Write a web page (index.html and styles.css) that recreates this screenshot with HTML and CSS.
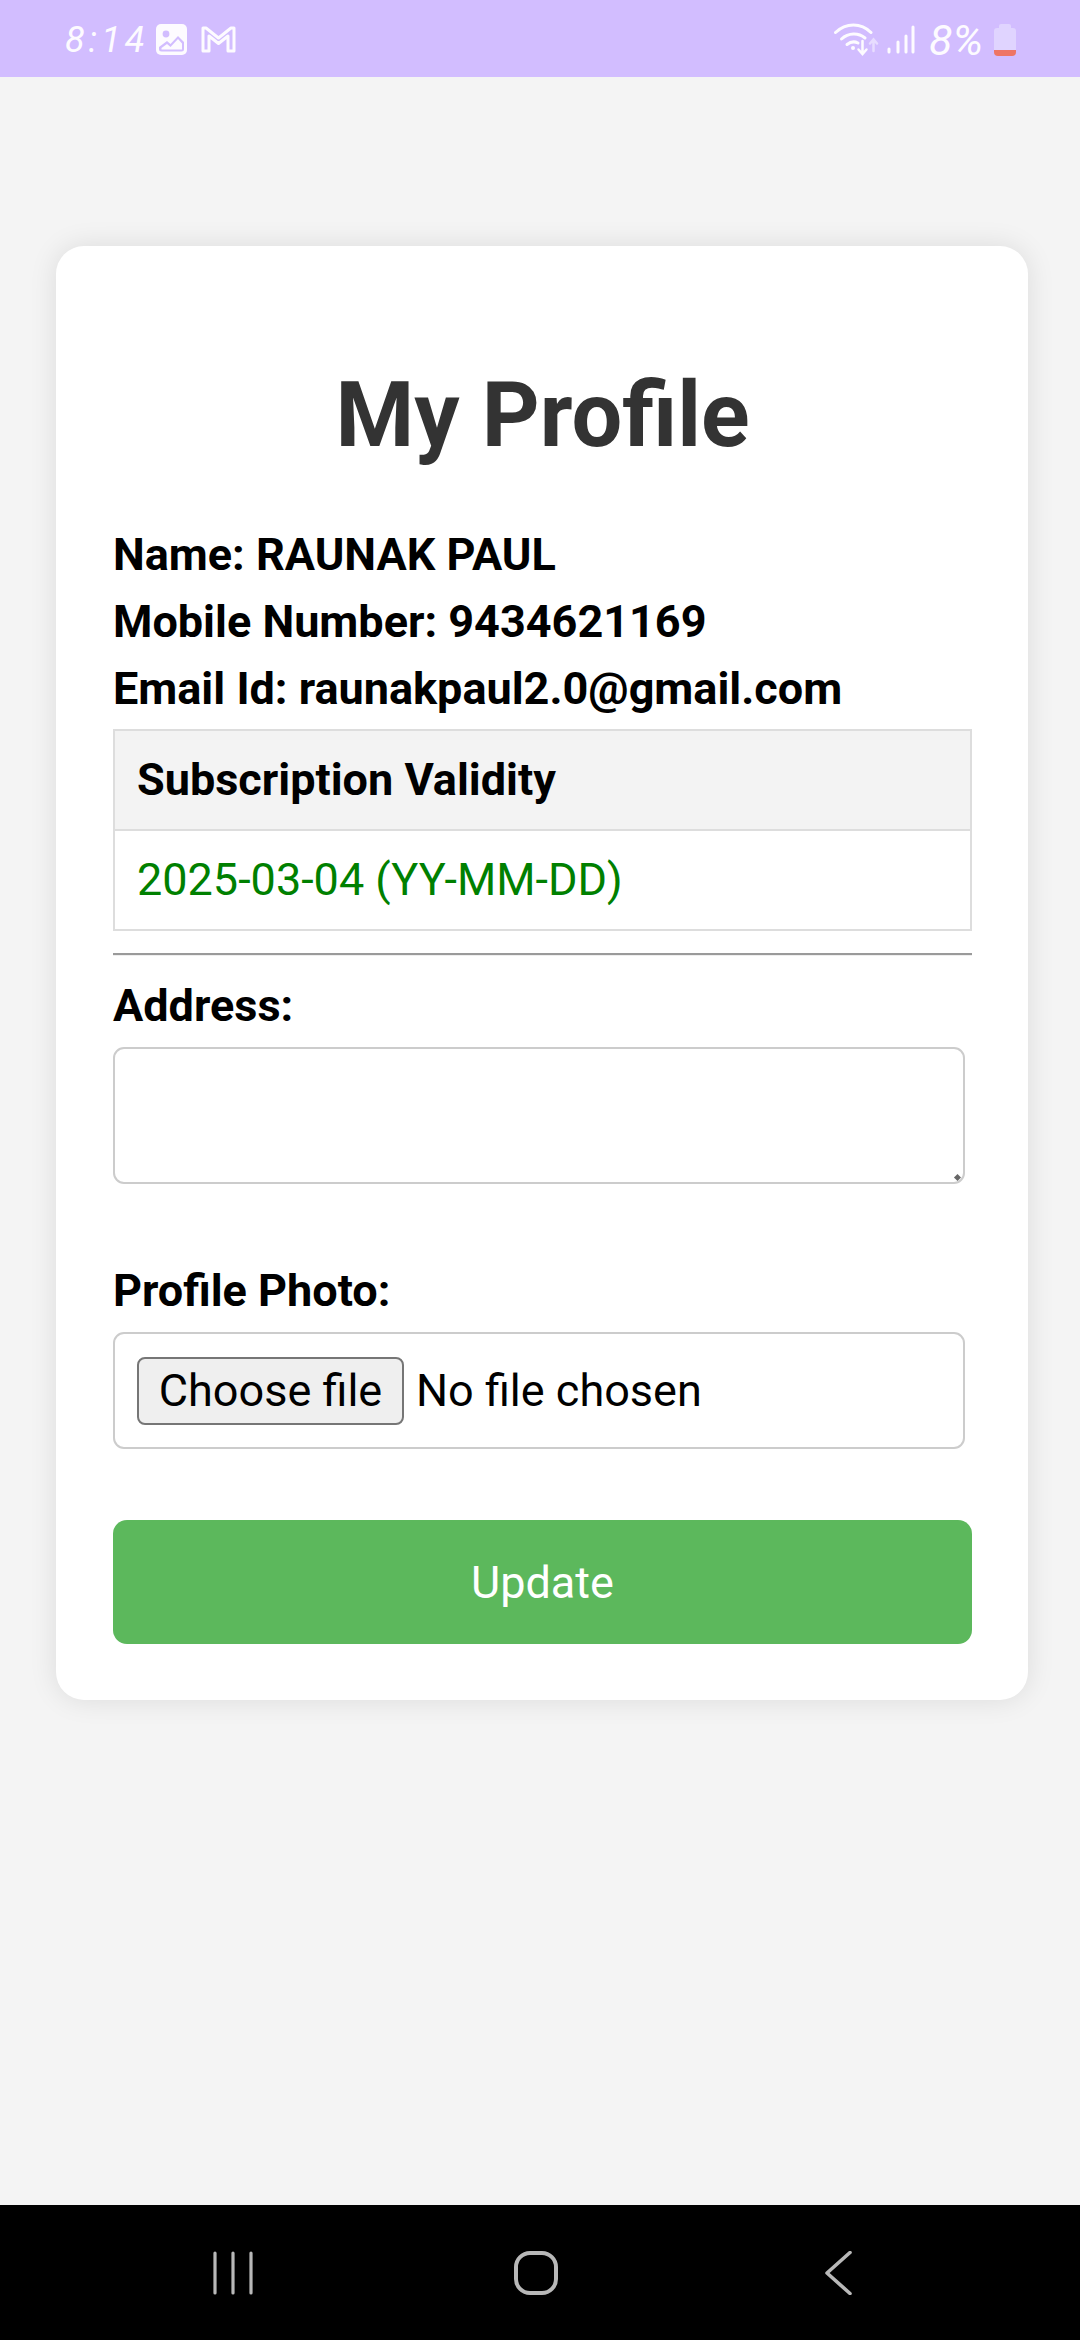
FILE: index.html
```html
<!DOCTYPE html>
<html lang="en">
<head>
<meta charset="utf-8">
<title>My Profile</title>
<link rel="stylesheet" href="styles.css">
</head>
<body>
<div class="screen">
  <header class="status">
    <div class="status-left">
      <span class="time">8:14</span>
      <svg class="ic-img" viewBox="0 0 31 31"><rect width="31" height="31" rx="5" fill="#fdfbff"/><circle cx="10" cy="10" r="3.4" fill="#d2bdff"/><path d="M3 25v-2l8 -6 3.5 3L22 12l6 6v7a2.5 2.5 0 0 1-2.5 2.500h-20A2.500 2.500 0 0 1 3 25z" fill="#d2bdff"/><path d="M5.500 25.500v-1.500l5.500-4 3.500 3 7.500-8 4 4.500v6z" fill="#fdfbff"/></svg>
      <svg class="ic-m" viewBox="0 0 35 27"><path d="M2 25V2h3l12.500 10L30 2h3v23h-6V10l-9.500 7.500L8 10v15z" fill="none" stroke="#fdfbff" stroke-width="3" stroke-linejoin="round"/></svg>
    </div>
    <div class="status-right">
      <svg class="ic-wifi" viewBox="0 0 46 33"><g fill="none" stroke="#fdfbff" stroke-width="3" stroke-linecap="round"><path d="M1.500 9.500C12 -0.500 27 -0.500 37 9.500"/><path d="M7.500 16c7-6.500 17-6.500 23.500-1"/><path d="M13 21.500c3.500-2.800 8-3 11-1.500"/></g><circle cx="19" cy="25" r="2" fill="#fdfbff"/><path d="M28.500 18v12M24.500 26.500l4 4.500 4-4.500" fill="none" stroke="#fdfbff" stroke-width="2.500" stroke-linecap="round"/><path d="M39.500 28V17M36 20.500l3.500-4 3.500 4" fill="none" stroke="#e7dcff" stroke-width="2.500" stroke-linecap="round"/></svg>
      <svg class="ic-signal" viewBox="0 0 28 29"><g stroke="#fdfbff" stroke-width="3" stroke-linecap="round"><path d="M2 27v-3" /><path d="M11 27v-10"/><path d="M19 27V11" /><path d="M26 27V2"/></g></svg>
      <span class="percent">8%</span>
      <svg class="ic-batt" viewBox="0 0 22 32"><path d="M7 0h8a2 2 0 0 1 2 2v2h2a3 3 0 0 1 3 3v19H0V7a3 3 0 0 1 3-3h2V2a2 2 0 0 1 2-2z" fill="#e0d4ff"/><path d="M0 26h22v2a4 4 0 0 1-4 4H4a4 4 0 0 1-4-4z" fill="#ee7565"/></svg>
    </div>
  </header>

  <main class="page">
    <section class="card">
      <h1 class="title">My Profile</h1>
      <div class="info">Name: RAUNAK PAUL</div>
      <div class="info">Mobile Number: 9434621169</div>
      <div class="info">Email Id: raunakpaul2.0@gmail.com</div>
      <table class="validity">
        <thead><tr><th>Subscription Validity</th></tr></thead>
        <tbody><tr><td>2025-03-04 (YY-MM-DD)</td></tr></tbody>
      </table>
      <hr class="rule">
      <form class="form">
        <label class="label" for="address">Address:</label>
        <div class="area-wrap">
          <textarea class="area" id="address"></textarea>
          <span class="grip"></span>
        </div>
        <label class="label label-photo">Profile Photo:</label>
        <div class="file">
          <span class="file-btn">Choose file</span>
          <span class="file-name">No file chosen</span>
        </div>
        <button class="update" type="button">Update</button>
      </form>
    </section>
  </main>

  <footer class="nav">
    <svg class="nav-ic" viewBox="0 0 44 44"><g stroke="#b8b8b8" stroke-width="3.200" stroke-linecap="round"><path d="M3 2v40"/><path d="M21 2v40"/><path d="M39 2v40"/></g></svg>
    <svg class="nav-ic" viewBox="0 0 44 44"><rect x="2" y="2" width="40" height="40" rx="14" fill="none" stroke="#b8b8b8" stroke-width="4"/></svg>
    <svg class="nav-ic" viewBox="0 0 44 44"><path d="M34 1.500L11 22l23 20.500" fill="none" stroke="#b8b8b8" stroke-width="3.600" stroke-linecap="round" stroke-linejoin="round"/></svg>
  </footer>
</div>
</body>
</html>
```
FILE: styles.css
```css
* { box-sizing: border-box; }
html, body { margin: 0; padding: 0; }
body { font-family: Roboto, "Liberation Sans", sans-serif; background: #f4f4f4; color: #000; }
.screen { width: 1080px; height: 2340px; display: flex; flex-direction: column; overflow: hidden; }

.status { height: 77px; flex: none; background: #d2bdff; display: flex; justify-content: space-between; align-items: center; padding: 2px 64px 0 65px; color: #fdfbff; }
.status-left, .status-right { display: flex; align-items: center; }
.time { font-size: 36px; font-weight: 400; font-style: italic; letter-spacing: 4px; width: 91px; line-height: 40px; }
.ic-img { width: 31px; height: 31px; }
.ic-m { width: 35px; height: 27px; margin-left: 14px; }
.ic-wifi { width: 46px; height: 33px; }
.ic-signal { width: 28px; height: 29px; margin-left: 7px; }
.percent { font-size: 43px; font-weight: 400; font-style: italic; margin-left: 14px; width: 65px; line-height: 40px; }
.ic-batt { width: 22px; height: 32px; }

.page { flex: 1; padding: 169px 52px 0 56px; }
.card { background: #fff; border-radius: 28px; box-shadow: 0 0 28px rgba(0, 0, 0, .1); padding: 57px 56px 56px 57px; height: 1454px; }
.title { margin: 60px 0 60px; font-size: 90px; line-height: 105px; font-weight: 700; text-align: center; color: #333; }
.info { font-size: 45px; font-weight: 700; line-height: 53px; margin-bottom: 14px; }

.validity { width: 100%; border-collapse: separate; border-spacing: 0; font-size: 45px; border: 2px solid #ddd; border-bottom: 0; }
.validity th, .validity td { border-bottom: 2px solid #ddd; padding: 22px 22px 23px; text-align: left; line-height: 53px; }
.validity th { background: #f3f3f3; font-weight: 700; }
.validity td { color: #008000; }

.rule { margin: 22px 0 0; height: 3px; border: 0; border-top: 2px solid #9a9a9a; border-bottom: 1px solid #eee; }

.form { display: flex; flex-direction: column; }
.label { font-size: 45px; font-weight: 700; line-height: 53px; margin: 23px 0 15px; }
.label-photo { margin: 80px 0 15px; }
.area-wrap { position: relative; width: 852px; height: 137px; }
.area { display: block; width: 100%; height: 100%; border: 2px solid #ccc; border-radius: 11px; background: #fff; resize: none; outline: 0; padding: 0; }
.grip { position: absolute; right: 5px; bottom: 4px; width: 5px; height: 5px; background: #666; transform: rotate(45deg); }

.file { width: 852px; height: 117px; border: 2px solid #ccc; border-radius: 11px; display: flex; align-items: center; padding-left: 22px; font-size: 45px; }
.file-btn { width: 267px; height: 68px; display: flex; align-items: center; justify-content: center; background: #efefef; border: 2px solid #767676; border-radius: 8px; }
.file-name { margin-left: 12px; }

.update { margin-top: 71px; width: 100%; height: 124px; border: 0; border-radius: 14px; background: #5cb85c; color: #fff; font: 400 45px Roboto, "Liberation Sans", sans-serif; padding: 0; }

.nav { height: 135px; flex: none; background: #000; display: grid; grid-template-columns: repeat(3, 302px); justify-content: center; justify-items: center; align-items: center; padding: 0 9px 0 0; }
.nav-ic { width: 44px; height: 44px; }
```
